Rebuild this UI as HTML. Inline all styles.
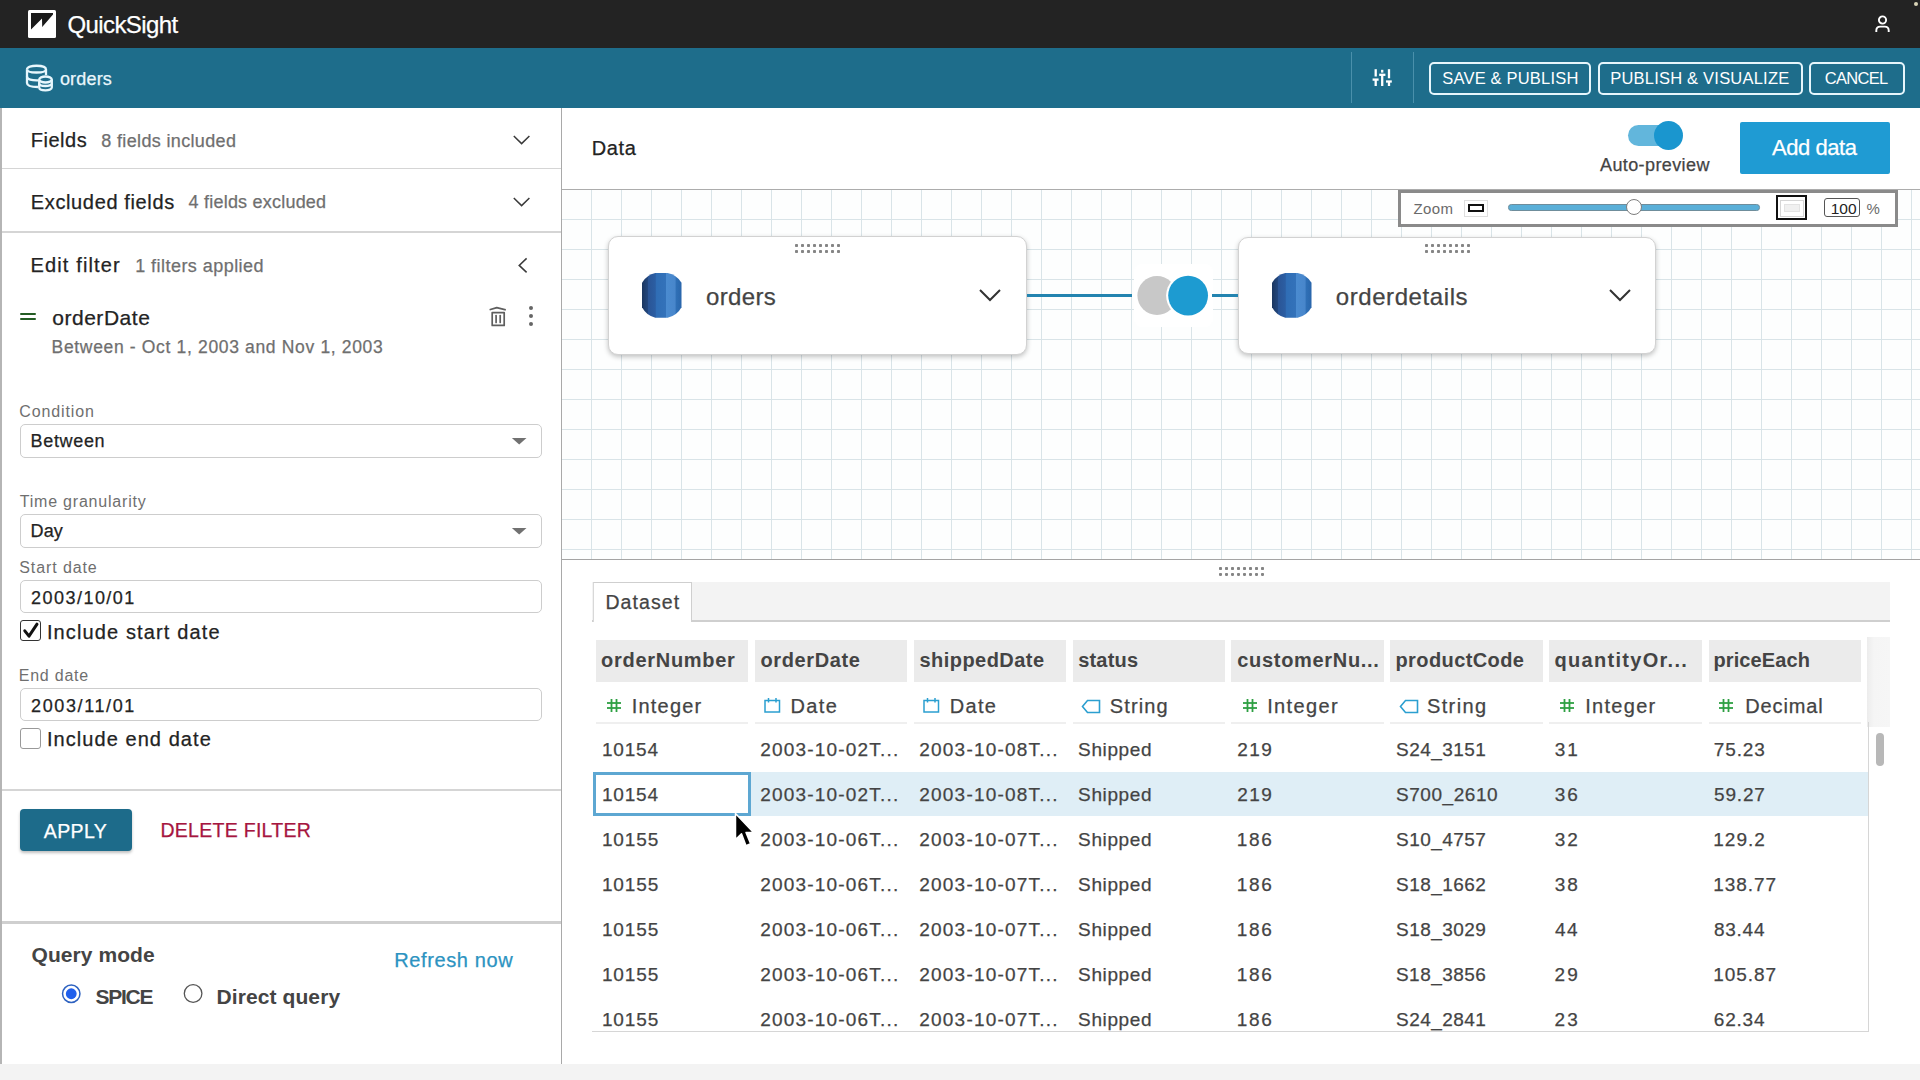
<!DOCTYPE html>
<html><head><meta charset="utf-8"><style>
html,body{margin:0;padding:0;width:1920px;height:1080px;overflow:hidden;background:#fff;font-family:"Liberation Sans",sans-serif;}
.t{position:absolute;white-space:nowrap;-webkit-text-stroke:0.25px currentColor;}
</style></head><body>
<div style="position:absolute;left:0px;top:0px;width:1920px;height:48px;background:#232323"></div>
<svg style="position:absolute;left:28px;top:10px" width="28" height="28" viewBox="0 0 28 28">
<rect x="0" y="0" width="28" height="28" rx="1.5" fill="#fff"/>
<polygon points="3,3 25,3 25,4.5 14.2,17 14,8.4 3,19.5" fill="#1a1a1a"/></svg>
<div style="position:absolute;left:1913.5px;top:1.8px;width:4.4px;height:4.4px;background:#d9d4b8;border-radius:50%"></div>
<svg style="position:absolute;left:1872px;top:12px" width="22" height="24" viewBox="0 0 22 24">
<circle cx="10.5" cy="8" r="3.6" fill="none" stroke="#fff" stroke-width="1.9"/>
<path d="M4.3 20 V18.5 Q4.3 14.6 8.2 14.6 H12.8 Q16.7 14.6 16.7 18.5 V20" fill="none" stroke="#fff" stroke-width="1.9"/></svg>
<div style="position:absolute;left:0px;top:48px;width:1920px;height:59.5px;background:#1e6d8b"></div>
<svg style="position:absolute;left:24px;top:63px" width="32" height="30" viewBox="0 0 32 30">
<g fill="none" stroke="#e8f7fd" stroke-width="2.3">
<path d="M3 6.5 C3 1.5 22 1.5 22 6.5 V12"/>
<path d="M3 6.5 C3 10.5 22 10.5 22 6.5"/>
<path d="M3 6.5 V20 C3 23 8 24 14 24"/>
<path d="M3 13.5 C3 16.5 8 17.5 14 17.3"/>
<ellipse cx="21.5" cy="16.5" rx="6.3" ry="3"/>
<path d="M15.2 16.5 V24.5 C15.2 28.3 27.8 28.3 27.8 24.5 V16.5"/>
<path d="M15.2 20.5 C15.2 23.8 27.8 23.8 27.8 20.5"/>
</g></svg>
<div style="position:absolute;left:1350.5px;top:52px;width:1.5px;height:51px;background:#4a90ab"></div>
<div style="position:absolute;left:1412.5px;top:52px;width:1.5px;height:51px;background:#4a90ab"></div>
<svg style="position:absolute;left:1370px;top:66px" width="26" height="24" viewBox="0 0 26 24">
<g stroke="#fff" stroke-width="2.3" fill="none">
<path d="M5.7 3.2 V10.5"/><path d="M2.6 13.6 H8.6"/><path d="M5.7 13.6 V20"/>
<path d="M12.2 3.8 V6.6"/><path d="M9.2 8.8 H15.4"/><path d="M12.2 8.8 V20"/>
<path d="M19 3.2 V12.3"/><path d="M16 15.5 H21.8"/><path d="M19 15.5 V20"/>
</g></svg>
<div style="position:absolute;left:1429px;top:61.5px;width:158px;height:29.5px;border:2px solid #e6f6fc;border-radius:5px"></div>
<div style="position:absolute;left:1597.7px;top:61.5px;width:201.29999999999995px;height:29.5px;border:2px solid #e6f6fc;border-radius:5px"></div>
<div style="position:absolute;left:1809px;top:61.5px;width:92px;height:29.5px;border:2px solid #e6f6fc;border-radius:5px"></div>
<div style="position:absolute;left:0px;top:107.5px;width:1.5px;height:957px;background:#b5b5b5"></div>
<div style="position:absolute;left:561.2px;top:107.5px;width:1px;height:957px;background:#a9a9a9"></div>
<div style="position:absolute;left:1.5px;top:167.5px;width:559.5px;height:1.5px;background:#d5d5d5"></div>
<div style="position:absolute;left:1.5px;top:231px;width:559.5px;height:1.5px;background:#d5d5d5"></div>
<svg style="position:absolute;left:513.4px;top:135.3px" width="18" height="11" viewBox="0 0 18 11"><path d="M0.8 1 L8.6 8.6 L16.4 1" fill="none" stroke="#3a3a3a" stroke-width="1.5"/></svg>
<svg style="position:absolute;left:513.4px;top:196.9px" width="18" height="11" viewBox="0 0 18 11"><path d="M0.8 1 L8.6 8.6 L16.4 1" fill="none" stroke="#3a3a3a" stroke-width="1.5"/></svg>
<svg style="position:absolute;left:510px;top:250px" width="24" height="30" viewBox="510 250 24 30"><path d="M526.6 258.4 L519.2 265.4 L526.6 272.4" fill="none" stroke="#3a3a3a" stroke-width="1.5"/></svg>
<div style="position:absolute;left:20.4px;top:312.5px;width:15.8px;height:2.1px;background:#245c24;border-radius:1px"></div>
<div style="position:absolute;left:20.4px;top:318.3px;width:15.8px;height:2.1px;background:#245c24;border-radius:1px"></div>
<svg style="position:absolute;left:480px;top:300px" width="40" height="32" viewBox="480 300 40 32">
<g fill="none" stroke="#5e5e5e" stroke-width="1.7" stroke-linejoin="round">
<path d="M489.6 309.8 L496.8 307.6 L505.8 309.8"/>
<rect x="492.2" y="312.6" width="12" height="12.8"/>
<path d="M496.1 315.6 V322.4" stroke-linecap="round"/><path d="M500.2 315.6 V322.4" stroke-linecap="round"/>
</g></svg>
<div style="position:absolute;left:528.9px;top:306.2px;width:4.2px;height:4.2px;background:#666;border-radius:50%"></div>
<div style="position:absolute;left:528.9px;top:314.29999999999995px;width:4.2px;height:4.2px;background:#666;border-radius:50%"></div>
<div style="position:absolute;left:528.9px;top:322.09999999999997px;width:4.2px;height:4.2px;background:#666;border-radius:50%"></div>
<div style="position:absolute;left:19.5px;top:423.5px;width:520px;height:32.0px;border:1.5px solid #cdcdcd;border-radius:5px;background:#fff"></div>
<svg style="position:absolute;left:511px;top:436.5px" width="16" height="9" viewBox="0 0 16 9"><path d="M0.9 1 H15.5 L8.2 7.6 Z" fill="#717171"/></svg>
<div style="position:absolute;left:19.5px;top:513.5px;width:520px;height:32.0px;border:1.5px solid #cdcdcd;border-radius:5px;background:#fff"></div>
<svg style="position:absolute;left:511px;top:526.5px" width="16" height="9" viewBox="0 0 16 9"><path d="M0.9 1 H15.5 L8.2 7.6 Z" fill="#717171"/></svg>
<div style="position:absolute;left:19.5px;top:579.5px;width:520px;height:31.5px;border:1.5px solid #cdcdcd;border-radius:5px;background:#fff"></div>
<div style="position:absolute;left:19.7px;top:619.8px;width:19px;height:19px;border:1.6px solid #333;border-radius:3px;background:#fff"></div>
<svg style="position:absolute;left:20px;top:620px" width="23" height="22" viewBox="0 0 23 22"><path d="M4.8 10.8 L9 16.2 L17 4.2" fill="none" stroke="#111" stroke-width="3" stroke-linejoin="round" stroke-linecap="round"/></svg>
<div style="position:absolute;left:19.5px;top:687.5px;width:520px;height:31.5px;border:1.5px solid #cdcdcd;border-radius:5px;background:#fff"></div>
<div style="position:absolute;left:19.8px;top:728.2px;width:19px;height:19px;border:1.4px solid #999;border-radius:3px;background:#fff"></div>
<div style="position:absolute;left:1.5px;top:789px;width:559.5px;height:1.5px;background:#d5d5d5"></div>
<div style="position:absolute;left:19.5px;top:808.5px;width:112px;height:42.5px;background:#1d6b8a;border-radius:4px;box-shadow:0 2px 3px rgba(0,0,0,0.25)"></div>
<div style="position:absolute;left:1.5px;top:921px;width:559.5px;height:2.5px;background:#cfcfcf"></div>
<svg style="position:absolute;left:59px;top:982px" width="24" height="24" viewBox="0 0 24 24">
<circle cx="12.25" cy="11.75" r="8.7" fill="#fff" stroke="#2e62c0" stroke-width="1.5"/><circle cx="12.25" cy="11.75" r="5.4" fill="#1f5fec"/></svg>
<svg style="position:absolute;left:180.5px;top:982px" width="24" height="24" viewBox="0 0 24 24">
<circle cx="12.1" cy="11.5" r="8.8" fill="#fff" stroke="#555" stroke-width="1.3"/></svg>
<div style="position:absolute;left:0px;top:1064px;width:1920px;height:16px;background:#f3f3f3"></div>
<div style="position:absolute;left:562px;top:189.2px;width:1358px;height:1.2px;background:#acacac"></div>
<div style="position:absolute;left:1627.5px;top:124.5px;width:50px;height:21px;background:#62b6dc;border-radius:11px"></div>
<div style="position:absolute;left:1654px;top:120.5px;width:29px;height:29px;background:#1a96cf;border-radius:50%"></div>
<div style="position:absolute;left:1740px;top:121.5px;width:150px;height:52px;background:#1f9bd3;border-radius:2px"></div>
<div style="position:absolute;left:562px;top:190px;width:1358px;height:369px;background-color:#fdfefe;
background-image:linear-gradient(to right, #d9e4e8 1.5px, transparent 1.5px),linear-gradient(to bottom, #d9e4e8 1.5px, transparent 1.5px);
background-size:30px 30px;background-position:29px 29px;"></div>
<div style="position:absolute;left:562px;top:559px;width:1358px;height:1.2px;background:#a4a4a4"></div>
<div style="position:absolute;left:1397.5px;top:189.5px;width:494px;height:31px;border:3px solid #8a8a8a;background:#fff"></div>
<div style="position:absolute;left:1464px;top:200px;width:21.5px;height:15px;border:1px solid #dedede;background:#fff"></div>
<div style="position:absolute;left:1467.7px;top:204.1px;width:11.999999999999998px;height:4.199999999999999px;border:2.2px solid #111"></div>
<div style="position:absolute;left:1508.2px;top:204.4px;width:251.8px;height:6.6px;background:#5aafd8;border-radius:3.3px;border:1px solid #6f8d9b;box-sizing:border-box"></div>
<div style="position:absolute;left:1625.6px;top:198.5px;width:16.5px;height:16.5px;background:#fff;border:1.5px solid #7d7d7d;border-radius:50%;box-sizing:border-box"></div>
<div style="position:absolute;left:1776px;top:195.3px;width:26.8px;height:21.2px;border:2.5px solid #111;background:#fff"></div>
<div style="position:absolute;left:1779.7px;top:199.7px;width:24.3px;height:17.1px;border:1.5px solid #d5d5d5;box-sizing:border-box"></div>
<div style="position:absolute;left:1783.7px;top:204px;width:16.3px;height:8px;border:1.5px solid #e3e3e3;background:#f0f0f0;box-sizing:border-box"></div>
<div style="position:absolute;left:1824.2px;top:198.2px;width:33.8px;height:17.1px;border:1.5px solid #555;background:#fff;border-radius:3px"></div>
<div style="position:absolute;left:608.4px;top:236.2px;width:416.4px;height:116.40000000000003px;border:1px solid #d2d2d2;border-radius:10px;background:#fff;box-shadow:0 2px 5px rgba(0,0,0,0.24)"></div>
<svg style="position:absolute;left:794.8px;top:243.5px" width="48" height="10" viewBox="0 0 48 10"><rect x="0.00" y="0" width="3" height="3" rx="0.8" fill="#858585"/><rect x="0.00" y="6" width="3" height="3" rx="0.8" fill="#858585"/><rect x="6.00" y="0" width="3" height="3" rx="0.8" fill="#858585"/><rect x="6.00" y="6" width="3" height="3" rx="0.8" fill="#858585"/><rect x="12.00" y="0" width="3" height="3" rx="0.8" fill="#858585"/><rect x="12.00" y="6" width="3" height="3" rx="0.8" fill="#858585"/><rect x="18.00" y="0" width="3" height="3" rx="0.8" fill="#858585"/><rect x="18.00" y="6" width="3" height="3" rx="0.8" fill="#858585"/><rect x="24.00" y="0" width="3" height="3" rx="0.8" fill="#858585"/><rect x="24.00" y="6" width="3" height="3" rx="0.8" fill="#858585"/><rect x="30.00" y="0" width="3" height="3" rx="0.8" fill="#858585"/><rect x="30.00" y="6" width="3" height="3" rx="0.8" fill="#858585"/><rect x="36.00" y="0" width="3" height="3" rx="0.8" fill="#858585"/><rect x="36.00" y="6" width="3" height="3" rx="0.8" fill="#858585"/><rect x="42.00" y="0" width="3" height="3" rx="0.8" fill="#858585"/><rect x="42.00" y="6" width="3" height="3" rx="0.8" fill="#858585"/></svg>
<svg style="position:absolute;left:642px;top:273px" width="40" height="45" viewBox="0 0 40 45">
<defs><linearGradient id="g608" x1="0" x2="1" y1="0" y2="0">
<stop offset="0" stop-color="#1b365f"/><stop offset="0.14" stop-color="#22467c"/><stop offset="0.16" stop-color="#2a5596"/><stop offset="0.34" stop-color="#2b5ea3"/><stop offset="0.35" stop-color="#2f6db5"/><stop offset="0.6" stop-color="#3372ba"/><stop offset="0.62" stop-color="#4a8bd0"/><stop offset="0.84" stop-color="#4886cb"/><stop offset="0.86" stop-color="#2f70b7"/><stop offset="1" stop-color="#2a66ab"/></linearGradient></defs>
<path d="M13.3 0 H25.6 Q35 2 39.5 9.7 V34.3 Q35 42.7 25.6 44.7 H13.3 Q4.5 42.7 0 34.3 V9.7 Q4.5 2 13.3 0 Z" fill="url(#g608)"/></svg>
<svg style="position:absolute;left:978px;top:286.5px" width="24" height="17" viewBox="0 0 24 17"><path d="M2 3 L12 13 L22 3" fill="none" stroke="#333" stroke-width="2"/></svg>
<div style="position:absolute;left:1238px;top:236.5px;width:416.4000000000001px;height:115.80000000000001px;border:1px solid #d2d2d2;border-radius:10px;background:#fff;box-shadow:0 2px 5px rgba(0,0,0,0.24)"></div>
<svg style="position:absolute;left:1425px;top:243.5px" width="48" height="10" viewBox="0 0 48 10"><rect x="0.00" y="0" width="3" height="3" rx="0.8" fill="#858585"/><rect x="0.00" y="6" width="3" height="3" rx="0.8" fill="#858585"/><rect x="6.00" y="0" width="3" height="3" rx="0.8" fill="#858585"/><rect x="6.00" y="6" width="3" height="3" rx="0.8" fill="#858585"/><rect x="12.00" y="0" width="3" height="3" rx="0.8" fill="#858585"/><rect x="12.00" y="6" width="3" height="3" rx="0.8" fill="#858585"/><rect x="18.00" y="0" width="3" height="3" rx="0.8" fill="#858585"/><rect x="18.00" y="6" width="3" height="3" rx="0.8" fill="#858585"/><rect x="24.00" y="0" width="3" height="3" rx="0.8" fill="#858585"/><rect x="24.00" y="6" width="3" height="3" rx="0.8" fill="#858585"/><rect x="30.00" y="0" width="3" height="3" rx="0.8" fill="#858585"/><rect x="30.00" y="6" width="3" height="3" rx="0.8" fill="#858585"/><rect x="36.00" y="0" width="3" height="3" rx="0.8" fill="#858585"/><rect x="36.00" y="6" width="3" height="3" rx="0.8" fill="#858585"/><rect x="42.00" y="0" width="3" height="3" rx="0.8" fill="#858585"/><rect x="42.00" y="6" width="3" height="3" rx="0.8" fill="#858585"/></svg>
<svg style="position:absolute;left:1271.8px;top:273px" width="40" height="45" viewBox="0 0 40 45">
<defs><linearGradient id="g1238" x1="0" x2="1" y1="0" y2="0">
<stop offset="0" stop-color="#1b365f"/><stop offset="0.14" stop-color="#22467c"/><stop offset="0.16" stop-color="#2a5596"/><stop offset="0.34" stop-color="#2b5ea3"/><stop offset="0.35" stop-color="#2f6db5"/><stop offset="0.6" stop-color="#3372ba"/><stop offset="0.62" stop-color="#4a8bd0"/><stop offset="0.84" stop-color="#4886cb"/><stop offset="0.86" stop-color="#2f70b7"/><stop offset="1" stop-color="#2a66ab"/></linearGradient></defs>
<path d="M13.3 0 H25.6 Q35 2 39.5 9.7 V34.3 Q35 42.7 25.6 44.7 H13.3 Q4.5 42.7 0 34.3 V9.7 Q4.5 2 13.3 0 Z" fill="url(#g1238)"/></svg>
<svg style="position:absolute;left:1608px;top:286.5px" width="24" height="17" viewBox="0 0 24 17"><path d="M2 3 L12 13 L22 3" fill="none" stroke="#333" stroke-width="2"/></svg>
<div style="position:absolute;left:1133.5px;top:264px;width:79px;height:63px;background:#fff;border-radius:8px"></div>
<div style="position:absolute;left:1026.8px;top:294px;width:105.4px;height:3px;background:#2384b0"></div>
<div style="position:absolute;left:1211.9px;top:294px;width:26.5px;height:3px;background:#2384b0"></div>
<svg style="position:absolute;left:1130px;top:270px" width="90" height="50" viewBox="0 0 90 50">
<circle cx="27" cy="25.5" r="19.6" fill="#c8c8c8"/>
<circle cx="58.1" cy="25.6" r="22" fill="#fff"/>
<circle cx="58.1" cy="25.6" r="19.9" fill="#1d9bd1"/></svg>
<svg style="position:absolute;left:1218.8px;top:567px" width="52" height="10" viewBox="0 0 52 10"><rect x="0.00" y="0.0" width="3" height="3" rx="0.8" fill="#858585"/><rect x="0.00" y="5.9" width="3" height="3" rx="0.8" fill="#858585"/><rect x="6.00" y="0.0" width="3" height="3" rx="0.8" fill="#858585"/><rect x="6.00" y="5.9" width="3" height="3" rx="0.8" fill="#858585"/><rect x="12.00" y="0.0" width="3" height="3" rx="0.8" fill="#858585"/><rect x="12.00" y="5.9" width="3" height="3" rx="0.8" fill="#858585"/><rect x="18.00" y="0.0" width="3" height="3" rx="0.8" fill="#858585"/><rect x="18.00" y="5.9" width="3" height="3" rx="0.8" fill="#858585"/><rect x="24.00" y="0.0" width="3" height="3" rx="0.8" fill="#858585"/><rect x="24.00" y="5.9" width="3" height="3" rx="0.8" fill="#858585"/><rect x="30.00" y="0.0" width="3" height="3" rx="0.8" fill="#858585"/><rect x="30.00" y="5.9" width="3" height="3" rx="0.8" fill="#858585"/><rect x="36.00" y="0.0" width="3" height="3" rx="0.8" fill="#858585"/><rect x="36.00" y="5.9" width="3" height="3" rx="0.8" fill="#858585"/><rect x="42.00" y="0.0" width="3" height="3" rx="0.8" fill="#858585"/><rect x="42.00" y="5.9" width="3" height="3" rx="0.8" fill="#858585"/></svg>
<div style="position:absolute;left:592px;top:581.5px;width:1298px;height:39px;background:#f3f3f3"></div>
<div style="position:absolute;left:592px;top:620px;width:1298px;height:1.5px;background:#cfcfcf"></div>
<div style="position:absolute;left:592.5px;top:581.5px;width:99px;height:40.5px;background:#fff;border-top:1.5px solid #cfcfcf;border-left:1px solid #d8d8d8;border-right:1px solid #cfcfcf;box-sizing:border-box"></div>
<div style="position:absolute;left:595.5px;top:640px;width:152.5px;height:42px;background:#ebebeb"></div>
<div style="position:absolute;left:595.5px;top:722px;width:152.5px;height:1.5px;background:#efefef"></div>
<div style="position:absolute;left:754.5px;top:640px;width:152.5px;height:42px;background:#ebebeb"></div>
<div style="position:absolute;left:754.5px;top:722px;width:152.5px;height:1.5px;background:#efefef"></div>
<div style="position:absolute;left:913.5px;top:640px;width:152.5px;height:42px;background:#ebebeb"></div>
<div style="position:absolute;left:913.5px;top:722px;width:152.5px;height:1.5px;background:#efefef"></div>
<div style="position:absolute;left:1072.5px;top:640px;width:152.5px;height:42px;background:#ebebeb"></div>
<div style="position:absolute;left:1072.5px;top:722px;width:152.5px;height:1.5px;background:#efefef"></div>
<div style="position:absolute;left:1231px;top:640px;width:152.5px;height:42px;background:#ebebeb"></div>
<div style="position:absolute;left:1231px;top:722px;width:152.5px;height:1.5px;background:#efefef"></div>
<div style="position:absolute;left:1390px;top:640px;width:152.5px;height:42px;background:#ebebeb"></div>
<div style="position:absolute;left:1390px;top:722px;width:152.5px;height:1.5px;background:#efefef"></div>
<div style="position:absolute;left:1549px;top:640px;width:152.5px;height:42px;background:#ebebeb"></div>
<div style="position:absolute;left:1549px;top:722px;width:152.5px;height:1.5px;background:#efefef"></div>
<div style="position:absolute;left:1708.5px;top:640px;width:152.5px;height:42px;background:#ebebeb"></div>
<div style="position:absolute;left:1708.5px;top:722px;width:152.5px;height:1.5px;background:#efefef"></div>
<div style="position:absolute;left:1866.5px;top:637px;width:23.5px;height:90px;background:linear-gradient(to right,#ececec,#f5f5f5 30%,#f6f6f6)"></div>
<div style="position:absolute;left:593px;top:772px;width:1275px;height:43.5px;background:#dfeef6"></div>
<div style="position:absolute;left:593px;top:771.5px;width:158px;height:44px;border:3px solid #5da7d2;background:#fff;box-sizing:border-box"></div>
<div style="position:absolute;left:1867.5px;top:722px;width:1.5px;height:310px;background:#d6d6d6"></div>
<div style="position:absolute;left:592px;top:1030.5px;width:1277px;height:1.5px;background:#d6d6d6"></div>
<div style="position:absolute;left:1875.5px;top:733px;width:8px;height:32.5px;background:#b8b8b8;border-radius:4px"></div>
<svg style="position:absolute;left:605.5px;top:698px" width="16" height="15" viewBox="0 0 16 15"><g stroke="#2ea043" stroke-width="1.8"><path d="M5.5 1 V14"/><path d="M10.5 1 V14"/><path d="M1 5 H15"/><path d="M1 10 H15"/></g></svg>
<svg style="position:absolute;left:764px;top:697px" width="17" height="16" viewBox="0 0 17 16"><g fill="none" stroke="#2b9fd0" stroke-width="1.5"><rect x="1" y="3.5" width="14.5" height="11.5"/><path d="M4.5 1 V5.5"/><path d="M12 1 V5.5"/></g></svg>
<svg style="position:absolute;left:923px;top:697px" width="17" height="16" viewBox="0 0 17 16"><g fill="none" stroke="#2b9fd0" stroke-width="1.5"><rect x="1" y="3.5" width="14.5" height="11.5"/><path d="M4.5 1 V5.5"/><path d="M12 1 V5.5"/></g></svg>
<svg style="position:absolute;left:1080.5px;top:698.5px" width="20" height="15" viewBox="0 0 20 15"><path d="M18.5 1.5 H6.5 L1.5 7.5 L6.5 13.5 H18.5 Z" fill="none" stroke="#2b9fd0" stroke-width="1.6"/></svg>
<svg style="position:absolute;left:1241.5px;top:698px" width="16" height="15" viewBox="0 0 16 15"><g stroke="#2ea043" stroke-width="1.8"><path d="M5.5 1 V14"/><path d="M10.5 1 V14"/><path d="M1 5 H15"/><path d="M1 10 H15"/></g></svg>
<svg style="position:absolute;left:1398.5px;top:698.5px" width="20" height="15" viewBox="0 0 20 15"><path d="M18.5 1.5 H6.5 L1.5 7.5 L6.5 13.5 H18.5 Z" fill="none" stroke="#2b9fd0" stroke-width="1.6"/></svg>
<svg style="position:absolute;left:1559px;top:698px" width="16" height="15" viewBox="0 0 16 15"><g stroke="#2ea043" stroke-width="1.8"><path d="M5.5 1 V14"/><path d="M10.5 1 V14"/><path d="M1 5 H15"/><path d="M1 10 H15"/></g></svg>
<svg style="position:absolute;left:1718px;top:698px" width="16" height="15" viewBox="0 0 16 15"><g stroke="#2ea043" stroke-width="1.8"><path d="M5.5 1 V14"/><path d="M10.5 1 V14"/><path d="M1 5 H15"/><path d="M1 10 H15"/></g></svg>
<svg style="position:absolute;left:725px;top:805px" width="40" height="50" viewBox="725 805 40 50">
<path d="M735.5 813.5 L735.5 839.5 L741.5 833.8 L746 845.8 L750.6 843.8 L746 832.5 L753.5 832.5 Z" fill="#000" stroke="#fff" stroke-width="1.5" stroke-linejoin="round"/></svg>
<div class="t" style="left:67.40px;top:9.98px;font-size:24px;line-height:29px;color:#ffffff;letter-spacing:-0.576px;">QuickSight</div>
<div class="t" style="left:59.90px;top:67.76px;font-size:18px;line-height:22px;color:#eaf7fc;letter-spacing:0.186px;">orders</div>
<div class="t" style="left:1442.30px;top:68.28px;font-size:16.5px;line-height:20px;color:#ffffff;letter-spacing:0.187px;-webkit-text-stroke:0;">SAVE &amp; PUBLISH</div>
<div class="t" style="left:1610.20px;top:68.28px;font-size:16.5px;line-height:20px;color:#ffffff;letter-spacing:0.215px;-webkit-text-stroke:0;">PUBLISH &amp; VISUALIZE</div>
<div class="t" style="left:1824.70px;top:68.28px;font-size:16.5px;line-height:20px;color:#ffffff;letter-spacing:-0.692px;-webkit-text-stroke:0;">CANCEL</div>
<div class="t" style="left:30.80px;top:128.47px;font-size:20px;line-height:24px;color:#232323;letter-spacing:0.510px;">Fields</div>
<div class="t" style="left:101.30px;top:130.16px;font-size:18px;line-height:22px;color:#6f6f6f;letter-spacing:0.345px;">8 fields included</div>
<div class="t" style="left:30.80px;top:189.77px;font-size:20px;line-height:24px;color:#232323;letter-spacing:0.634px;">Excluded fields</div>
<div class="t" style="left:188.60px;top:191.46px;font-size:18px;line-height:22px;color:#6f6f6f;letter-spacing:0.214px;">4 fields excluded</div>
<div class="t" style="left:30.40px;top:253.37px;font-size:20px;line-height:24px;color:#232323;letter-spacing:1.156px;">Edit filter</div>
<div class="t" style="left:135.20px;top:255.06px;font-size:18px;line-height:22px;color:#6f6f6f;letter-spacing:0.453px;">1 filters applied</div>
<div class="t" style="left:52.20px;top:304.82px;font-size:21px;line-height:25px;color:#232323;letter-spacing:0.537px;">orderDate</div>
<div class="t" style="left:51.60px;top:337.44px;font-size:17.5px;line-height:21px;color:#6f6f6f;letter-spacing:0.659px;">Between - Oct 1, 2003 and Nov 1, 2003</div>
<div class="t" style="left:19.20px;top:401.56px;font-size:16px;line-height:19px;color:#6f6f6f;letter-spacing:0.900px;-webkit-text-stroke:0;">Condition</div>
<div class="t" style="left:30.60px;top:429.76px;font-size:18px;line-height:22px;color:#232323;letter-spacing:0.660px;">Between</div>
<div class="t" style="left:19.70px;top:491.76px;font-size:16px;line-height:19px;color:#6f6f6f;letter-spacing:0.799px;-webkit-text-stroke:0;">Time granularity</div>
<div class="t" style="left:30.60px;top:519.66px;font-size:18px;line-height:22px;color:#232323;letter-spacing:0.045px;">Day</div>
<div class="t" style="left:19.30px;top:557.66px;font-size:16px;line-height:19px;color:#6f6f6f;letter-spacing:0.891px;-webkit-text-stroke:0;">Start date</div>
<div class="t" style="left:31.10px;top:586.76px;font-size:18px;line-height:22px;color:#232323;letter-spacing:1.458px;">2003/10/01</div>
<div class="t" style="left:46.90px;top:620.07px;font-size:20px;line-height:24px;color:#232323;letter-spacing:1.129px;">Include start date</div>
<div class="t" style="left:18.70px;top:665.96px;font-size:16px;line-height:19px;color:#6f6f6f;letter-spacing:0.778px;-webkit-text-stroke:0;">End date</div>
<div class="t" style="left:31.10px;top:694.56px;font-size:18px;line-height:22px;color:#232323;letter-spacing:1.607px;">2003/11/01</div>
<div class="t" style="left:46.90px;top:727.07px;font-size:20px;line-height:24px;color:#232323;letter-spacing:1.068px;">Include end date</div>
<div class="t" style="left:43.80px;top:819.74px;font-size:19.5px;line-height:23px;color:#ffffff;letter-spacing:0.371px;">APPLY</div>
<div class="t" style="left:160.40px;top:819.24px;font-size:19.5px;line-height:23px;color:#a6163f;letter-spacing:0.290px;">DELETE FILTER</div>
<div class="t" style="left:31.50px;top:942.22px;font-size:21px;line-height:25px;color:#444444;letter-spacing:0.072px;font-weight:700;-webkit-text-stroke:0;">Query mode</div>
<div class="t" style="left:394.20px;top:948.37px;font-size:20px;line-height:24px;color:#2c93c1;letter-spacing:0.617px;">Refresh now</div>
<div class="t" style="left:95.40px;top:983.52px;font-size:21px;line-height:25px;color:#444444;letter-spacing:-1.253px;font-weight:700;-webkit-text-stroke:0;">SPICE</div>
<div class="t" style="left:216.60px;top:983.52px;font-size:21px;line-height:25px;color:#444444;letter-spacing:0.085px;font-weight:700;-webkit-text-stroke:0;">Direct query</div>
<div class="t" style="left:591.70px;top:136.27px;font-size:20px;line-height:24px;color:#232323;letter-spacing:0.659px;">Data</div>
<div class="t" style="left:1600.00px;top:153.76px;font-size:18px;line-height:22px;color:#444444;letter-spacing:0.396px;">Auto-preview</div>
<div class="t" style="left:1772.00px;top:135.38px;font-size:22px;line-height:26px;color:#ffffff;letter-spacing:-0.449px;">Add data</div>
<div class="t" style="left:1413.40px;top:199.60px;font-size:15px;line-height:18px;color:#6a6a6a;letter-spacing:0.384px;-webkit-text-stroke:0;">Zoom</div>
<div class="t" style="left:1830.70px;top:199.03px;font-size:15.5px;line-height:19px;color:#232323;letter-spacing:-0.020px;-webkit-text-stroke:0;">100</div>
<div class="t" style="left:1866.40px;top:199.70px;font-size:15px;line-height:18px;color:#6a6a6a;letter-spacing:0.000px;-webkit-text-stroke:0;">%</div>
<div class="t" style="left:706.00px;top:281.78px;font-size:24px;line-height:29px;color:#444444;letter-spacing:0.355px;">orders</div>
<div class="t" style="left:1335.70px;top:281.78px;font-size:24px;line-height:29px;color:#444444;letter-spacing:0.591px;">orderdetails</div>
<div class="t" style="left:605.40px;top:591.14px;font-size:19.5px;line-height:23px;color:#444444;letter-spacing:1.086px;">Dataset</div>
<div class="t" style="left:601.10px;top:648.07px;font-size:20px;line-height:24px;color:#444444;letter-spacing:0.709px;font-weight:700;-webkit-text-stroke:0;">orderNumber</div>
<div class="t" style="left:760.50px;top:648.07px;font-size:20px;line-height:24px;color:#444444;letter-spacing:0.619px;font-weight:700;-webkit-text-stroke:0;">orderDate</div>
<div class="t" style="left:919.50px;top:648.07px;font-size:20px;line-height:24px;color:#444444;letter-spacing:0.450px;font-weight:700;-webkit-text-stroke:0;">shippedDate</div>
<div class="t" style="left:1078.20px;top:648.07px;font-size:20px;line-height:24px;color:#444444;letter-spacing:0.183px;font-weight:700;-webkit-text-stroke:0;">status</div>
<div class="t" style="left:1237.30px;top:648.07px;font-size:20px;line-height:24px;color:#444444;letter-spacing:0.683px;font-weight:700;-webkit-text-stroke:0;">customerNu...</div>
<div class="t" style="left:1395.50px;top:648.07px;font-size:20px;line-height:24px;color:#444444;letter-spacing:0.399px;font-weight:700;-webkit-text-stroke:0;">productCode</div>
<div class="t" style="left:1554.60px;top:648.07px;font-size:20px;line-height:24px;color:#444444;letter-spacing:1.298px;font-weight:700;-webkit-text-stroke:0;">quantityOr...</div>
<div class="t" style="left:1713.40px;top:648.07px;font-size:20px;line-height:24px;color:#444444;letter-spacing:0.126px;font-weight:700;-webkit-text-stroke:0;">priceEach</div>
<div class="t" style="left:631.70px;top:694.07px;font-size:20px;line-height:24px;color:#444444;letter-spacing:1.216px;">Integer</div>
<div class="t" style="left:790.40px;top:694.07px;font-size:20px;line-height:24px;color:#444444;letter-spacing:1.392px;">Date</div>
<div class="t" style="left:949.80px;top:694.07px;font-size:20px;line-height:24px;color:#444444;letter-spacing:1.259px;">Date</div>
<div class="t" style="left:1109.80px;top:694.07px;font-size:20px;line-height:24px;color:#444444;letter-spacing:1.095px;">String</div>
<div class="t" style="left:1267.20px;top:694.07px;font-size:20px;line-height:24px;color:#444444;letter-spacing:1.366px;">Integer</div>
<div class="t" style="left:1426.90px;top:694.07px;font-size:20px;line-height:24px;color:#444444;letter-spacing:1.415px;">String</div>
<div class="t" style="left:1585.20px;top:694.07px;font-size:20px;line-height:24px;color:#444444;letter-spacing:1.299px;">Integer</div>
<div class="t" style="left:1745.20px;top:694.07px;font-size:20px;line-height:24px;color:#444444;letter-spacing:0.885px;">Decimal</div>
<div class="t" style="left:601.90px;top:737.92px;font-size:19px;line-height:23px;color:#444444;letter-spacing:0.833px;">10154</div>
<div class="t" style="left:760.30px;top:737.92px;font-size:19px;line-height:23px;color:#444444;letter-spacing:1.181px;">2003-10-02T...</div>
<div class="t" style="left:919.30px;top:737.92px;font-size:19px;line-height:23px;color:#444444;letter-spacing:1.204px;">2003-10-08T...</div>
<div class="t" style="left:1078.10px;top:737.92px;font-size:19px;line-height:23px;color:#444444;letter-spacing:0.623px;">Shipped</div>
<div class="t" style="left:1237.30px;top:737.92px;font-size:19px;line-height:23px;color:#444444;letter-spacing:1.433px;">219</div>
<div class="t" style="left:1396.00px;top:737.92px;font-size:19px;line-height:23px;color:#444444;letter-spacing:0.461px;">S24_3151</div>
<div class="t" style="left:1554.70px;top:737.92px;font-size:19px;line-height:23px;color:#444444;letter-spacing:2.033px;">31</div>
<div class="t" style="left:1713.80px;top:737.92px;font-size:19px;line-height:23px;color:#444444;letter-spacing:0.855px;">75.23</div>
<div class="t" style="left:601.90px;top:782.92px;font-size:19px;line-height:23px;color:#444444;letter-spacing:0.833px;">10154</div>
<div class="t" style="left:760.30px;top:782.92px;font-size:19px;line-height:23px;color:#444444;letter-spacing:1.181px;">2003-10-02T...</div>
<div class="t" style="left:919.30px;top:782.92px;font-size:19px;line-height:23px;color:#444444;letter-spacing:1.204px;">2003-10-08T...</div>
<div class="t" style="left:1078.10px;top:782.92px;font-size:19px;line-height:23px;color:#444444;letter-spacing:0.623px;">Shipped</div>
<div class="t" style="left:1237.30px;top:782.92px;font-size:19px;line-height:23px;color:#444444;letter-spacing:1.433px;">219</div>
<div class="t" style="left:1396.00px;top:782.92px;font-size:19px;line-height:23px;color:#444444;letter-spacing:0.557px;">S700_2610</div>
<div class="t" style="left:1554.70px;top:782.92px;font-size:19px;line-height:23px;color:#444444;letter-spacing:1.933px;">36</div>
<div class="t" style="left:1714.00px;top:782.92px;font-size:19px;line-height:23px;color:#444444;letter-spacing:0.830px;">59.27</div>
<div class="t" style="left:601.90px;top:827.92px;font-size:19px;line-height:23px;color:#444444;letter-spacing:0.908px;">10155</div>
<div class="t" style="left:760.30px;top:827.92px;font-size:19px;line-height:23px;color:#444444;letter-spacing:1.181px;">2003-10-06T...</div>
<div class="t" style="left:919.30px;top:827.92px;font-size:19px;line-height:23px;color:#444444;letter-spacing:1.204px;">2003-10-07T...</div>
<div class="t" style="left:1078.10px;top:827.92px;font-size:19px;line-height:23px;color:#444444;letter-spacing:0.623px;">Shipped</div>
<div class="t" style="left:1236.80px;top:827.92px;font-size:19px;line-height:23px;color:#444444;letter-spacing:1.633px;">186</div>
<div class="t" style="left:1396.00px;top:827.92px;font-size:19px;line-height:23px;color:#444444;letter-spacing:0.461px;">S10_4757</div>
<div class="t" style="left:1554.70px;top:827.92px;font-size:19px;line-height:23px;color:#444444;letter-spacing:2.033px;">32</div>
<div class="t" style="left:1713.30px;top:827.92px;font-size:19px;line-height:23px;color:#444444;letter-spacing:1.005px;">129.2</div>
<div class="t" style="left:601.90px;top:872.92px;font-size:19px;line-height:23px;color:#444444;letter-spacing:0.908px;">10155</div>
<div class="t" style="left:760.30px;top:872.92px;font-size:19px;line-height:23px;color:#444444;letter-spacing:1.181px;">2003-10-06T...</div>
<div class="t" style="left:919.30px;top:872.92px;font-size:19px;line-height:23px;color:#444444;letter-spacing:1.204px;">2003-10-07T...</div>
<div class="t" style="left:1078.10px;top:872.92px;font-size:19px;line-height:23px;color:#444444;letter-spacing:0.623px;">Shipped</div>
<div class="t" style="left:1236.80px;top:872.92px;font-size:19px;line-height:23px;color:#444444;letter-spacing:1.633px;">186</div>
<div class="t" style="left:1396.00px;top:872.92px;font-size:19px;line-height:23px;color:#444444;letter-spacing:0.461px;">S18_1662</div>
<div class="t" style="left:1554.70px;top:872.92px;font-size:19px;line-height:23px;color:#444444;letter-spacing:1.933px;">38</div>
<div class="t" style="left:1713.30px;top:872.92px;font-size:19px;line-height:23px;color:#444444;letter-spacing:0.951px;">138.77</div>
<div class="t" style="left:601.90px;top:917.92px;font-size:19px;line-height:23px;color:#444444;letter-spacing:0.908px;">10155</div>
<div class="t" style="left:760.30px;top:917.92px;font-size:19px;line-height:23px;color:#444444;letter-spacing:1.181px;">2003-10-06T...</div>
<div class="t" style="left:919.30px;top:917.92px;font-size:19px;line-height:23px;color:#444444;letter-spacing:1.204px;">2003-10-07T...</div>
<div class="t" style="left:1078.10px;top:917.92px;font-size:19px;line-height:23px;color:#444444;letter-spacing:0.623px;">Shipped</div>
<div class="t" style="left:1236.80px;top:917.92px;font-size:19px;line-height:23px;color:#444444;letter-spacing:1.633px;">186</div>
<div class="t" style="left:1396.00px;top:917.92px;font-size:19px;line-height:23px;color:#444444;letter-spacing:0.461px;">S18_3029</div>
<div class="t" style="left:1555.00px;top:917.92px;font-size:19px;line-height:23px;color:#444444;letter-spacing:1.333px;">44</div>
<div class="t" style="left:1713.90px;top:917.92px;font-size:19px;line-height:23px;color:#444444;letter-spacing:0.755px;">83.44</div>
<div class="t" style="left:601.90px;top:962.92px;font-size:19px;line-height:23px;color:#444444;letter-spacing:0.908px;">10155</div>
<div class="t" style="left:760.30px;top:962.92px;font-size:19px;line-height:23px;color:#444444;letter-spacing:1.181px;">2003-10-06T...</div>
<div class="t" style="left:919.30px;top:962.92px;font-size:19px;line-height:23px;color:#444444;letter-spacing:1.204px;">2003-10-07T...</div>
<div class="t" style="left:1078.10px;top:962.92px;font-size:19px;line-height:23px;color:#444444;letter-spacing:0.623px;">Shipped</div>
<div class="t" style="left:1236.80px;top:962.92px;font-size:19px;line-height:23px;color:#444444;letter-spacing:1.633px;">186</div>
<div class="t" style="left:1396.00px;top:962.92px;font-size:19px;line-height:23px;color:#444444;letter-spacing:0.447px;">S18_3856</div>
<div class="t" style="left:1554.50px;top:962.92px;font-size:19px;line-height:23px;color:#444444;letter-spacing:2.233px;">29</div>
<div class="t" style="left:1713.30px;top:962.92px;font-size:19px;line-height:23px;color:#444444;letter-spacing:0.951px;">105.87</div>
<div class="t" style="left:601.90px;top:1007.92px;font-size:19px;line-height:23px;color:#444444;letter-spacing:0.908px;">10155</div>
<div class="t" style="left:760.30px;top:1007.92px;font-size:19px;line-height:23px;color:#444444;letter-spacing:1.181px;">2003-10-06T...</div>
<div class="t" style="left:919.30px;top:1007.92px;font-size:19px;line-height:23px;color:#444444;letter-spacing:1.204px;">2003-10-07T...</div>
<div class="t" style="left:1078.10px;top:1007.92px;font-size:19px;line-height:23px;color:#444444;letter-spacing:0.623px;">Shipped</div>
<div class="t" style="left:1236.80px;top:1007.92px;font-size:19px;line-height:23px;color:#444444;letter-spacing:1.633px;">186</div>
<div class="t" style="left:1396.00px;top:1007.92px;font-size:19px;line-height:23px;color:#444444;letter-spacing:0.461px;">S24_2841</div>
<div class="t" style="left:1554.50px;top:1007.92px;font-size:19px;line-height:23px;color:#444444;letter-spacing:2.133px;">23</div>
<div class="t" style="left:1713.80px;top:1007.92px;font-size:19px;line-height:23px;color:#444444;letter-spacing:0.780px;">62.34</div>
</body></html>
